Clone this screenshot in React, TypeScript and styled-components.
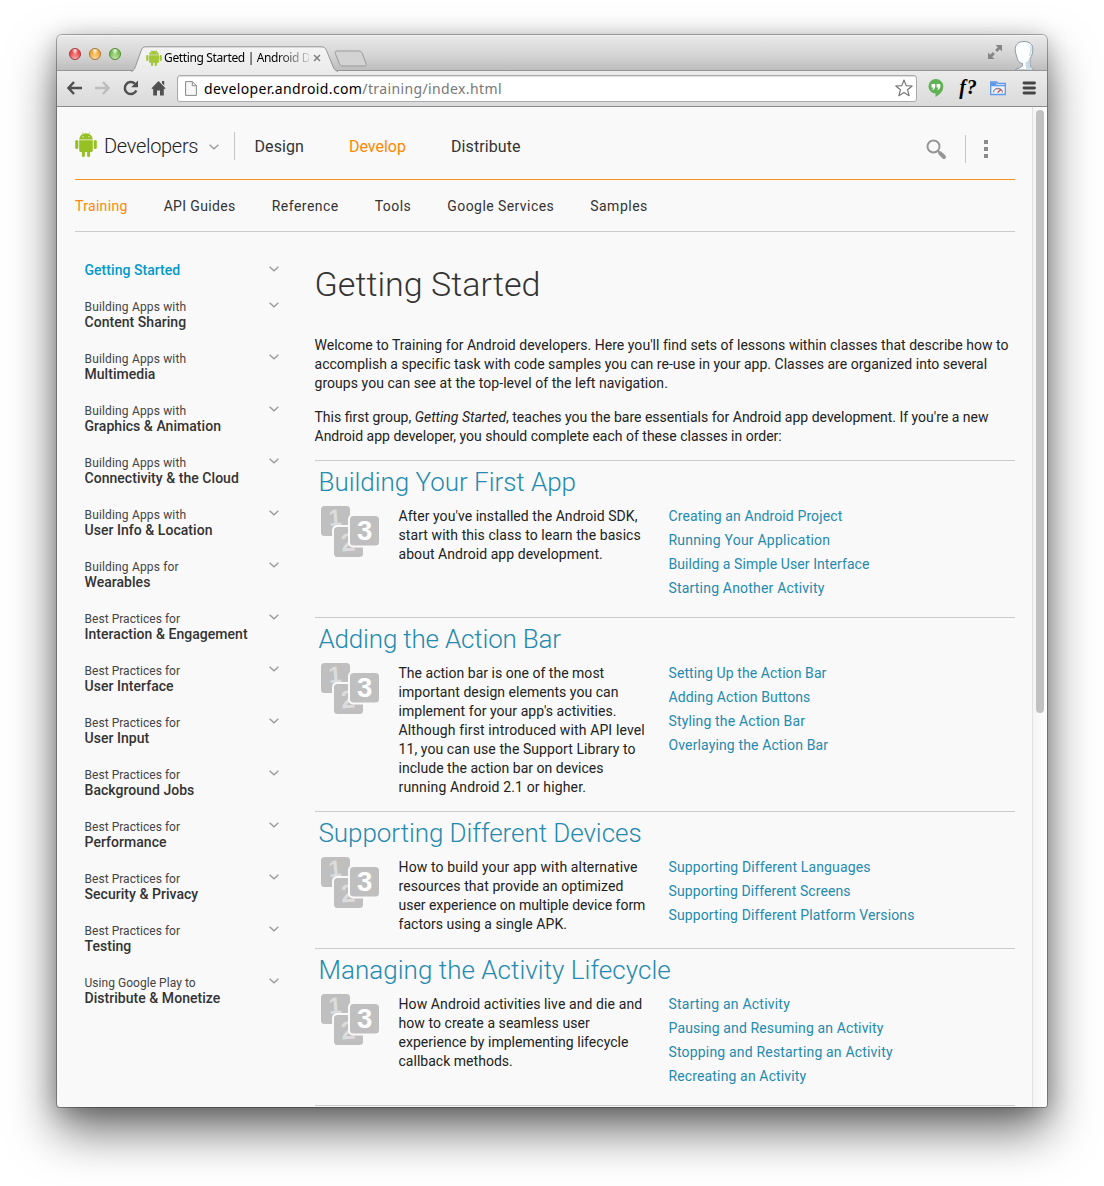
import React from 'react';
import styled, { createGlobalStyle } from 'styled-components';

const GlobalStyle = createGlobalStyle`
  * { box-sizing: border-box; }
  html, body { margin: 0; padding: 0; background: #fff; }
  body { font-family: Roboto, "Liberation Sans", sans-serif; color: #222; overflow: hidden; }
  ul, h1, h2, p { margin: 0; padding: 0; font-weight: inherit; }
  ul { list-style: none; }
  svg { display: block; flex: none; }
`;

const Desktop = styled.div`
  height: 1186px;
  padding: 35px 57px 79px;
`;

const Window = styled.div`
  display: flex;
  flex-direction: column;
  width: 990px;
  height: 1072px;
  border-radius: 5px 5px 3px 3px;
  background: #f9f9f9;
  box-shadow: 0 0 0 1px rgba(0, 0, 0, 0.3), 0 24px 48px rgba(0, 0, 0, 0.57), 0 4px 22px rgba(0, 0, 0, 0.24);
  overflow: hidden;
`;

const TitleBar = styled.div`
  display: flex;
  height: 36px;
  flex: none;
  padding-left: 12px;
  background: linear-gradient(#e9e9e9, #d4d4d4 55%, #bcbcbc);
  border-top: 1px solid #f4f4f4;
  box-shadow: inset 0 -1px 0 #979797;
`;

const Lights = styled.div`
  display: flex;
  gap: 8px;
  padding-top: 12px;
  width: 62px;
`;

const Light = styled.span<{ $hue: string; $edge: string }>`
  width: 12px;
  height: 12px;
  border-radius: 50%;
  border: 1px solid ${(p) => p.$edge};
  background: radial-gradient(ellipse at 50% 15%, rgba(255, 255, 255, 0.95) 0, rgba(255, 255, 255, 0) 42%),
    radial-gradient(circle at 50% 100%, rgba(255, 255, 255, 0.6), rgba(255, 255, 255, 0) 60%), ${(p) => p.$hue};
`;

const Tab = styled.div`
  position: relative;
  display: flex;
  align-items: center;
  width: 208px;
  height: 25px;
  margin-top: 10px;
  padding: 0 0 1px 15px;
`;

const TabShape = styled.svg`
  position: absolute;
  inset: 0;
`;

const TabLabel = styled.span`
  position: relative;
  width: 145px;
  margin: 0 0 0 2px;
  white-space: nowrap;
  font: 12px/16px "Noto Sans", "Open Sans", sans-serif;
  letter-spacing: -0.36px;
  color: #000;
  mask-image: linear-gradient(90deg, #000 112px, rgba(0, 0, 0, 0.15) 144px);
`;

const TabIcon = styled.span`
  position: relative;
`;

const NewTab = styled.svg`
  margin: 14px 0 0 -5px;
`;

const TitleActions = styled.div`
  display: flex;
  margin-left: auto;
  padding-right: 12px;
`;

const Toolbar = styled.div`
  display: flex;
  align-items: center;
  height: 36px;
  flex: none;
  padding: 0 10px 1px 9px;
  background: linear-gradient(#ebebeb, #dadada);
  border-bottom: 1px solid #8c8c8c;
`;

const NavButtons = styled.div`
  display: flex;
  gap: 11px;
  width: 111px;
`;

const Omnibox = styled.div`
  display: flex;
  align-items: center;
  width: 740px;
  height: 27px;
  padding: 0 3px 0 7px;
  border: 1px solid #aaa;
  border-radius: 3px;
  background: #fff;
  box-shadow: inset 0 1px 1px #ddd;
`;

const Url = styled.span`
  flex: 1;
  margin: 1px 0 0 7px;
  font: 14px/20px "Noto Sans", "Open Sans", sans-serif;
  letter-spacing: 0.375px;
  color: #000;
  em { font-style: normal; color: #777; }
`;

const Extensions = styled.div`
  display: flex;
  align-items: center;
  justify-content: space-between;
  width: 109px;
  margin-left: 11px;
`;

const FontFinder = styled.span`
  margin: -2px -4px 0 -1px;
  font: italic 700 20px/24px "Liberation Serif", serif;
  letter-spacing: 0.8px;
  color: #000;
  white-space: nowrap;
`;

const Viewport = styled.div`
  display: flex;
  flex: 1;
  min-height: 0;
`;

const Page = styled.div`
  width: 975px;
  padding: 0 17px 0 18px;
  overflow: hidden;
`;

const ScrollTrack = styled.div`
  width: 15px;
  padding: 3px 3px 0;
  border-left: 1px solid #e2e2e2;
  background: linear-gradient(90deg, #f4f4f4, #fefefe);
`;

const ScrollThumb = styled.div`
  width: 8px;
  height: 603px;
  border-radius: 4px;
  background: #c1c1c1;
`;

const Header = styled.header`
  display: flex;
  height: 73px;
  border-bottom: 1px solid #f7901e;
`;

const Brand = styled.div`
  display: flex;
  width: 160px;
  height: 28px;
  margin-top: 25px;
  border-right: 1px solid #c4c4c4;
`;

const BrandName = styled.span`
  width: 105px;
  margin-left: 7px;
  font-size: 20px;
  font-weight: 300;
  line-height: 28px;
  letter-spacing: -0.3px;
  color: #222;
`;

const TopNav = styled.nav`
  display: flex;
  gap: 45px;
  margin: 27px 0 0 19.5px;
  font-size: 16px;
  line-height: 26px;
`;

const NavLink = styled.a<{ $active?: boolean; $spacing?: number }>`
  color: ${(p) => (p.$active ? '#f80' : '#333')};
  letter-spacing: ${(p) => p.$spacing ?? 0}px;
  white-space: nowrap;
`;

const HeaderTools = styled.div`
  display: flex;
  align-items: center;
  gap: 18px;
  height: 28px;
  margin: 28px 27px 0 auto;
`;

const Divider = styled.span`
  width: 1px;
  height: 28px;
  background: #c8c8c8;
`;

const SubNav = styled.nav`
  display: flex;
  gap: 36px;
  height: 52px;
  margin-bottom: 0;
  font-size: 14px;
  line-height: 52px;
  border-bottom: 1px solid #ccc;
`;

const Columns = styled.div`
  display: flex;
`;

const Sidebar = styled.ul`
  width: 240px;
  padding: 20px 36px 0 9.5px;
`;

const SideItem = styled.li`
  display: flex;
  justify-content: space-between;
  padding: 10px 0;
  line-height: 16px;
`;

const SideLead = styled.span<{ $spacing: number }>`
  display: block;
  margin-bottom: -2px;
  font-size: 12px;
  line-height: 18px;
  letter-spacing: ${(p) => p.$spacing}px;
  color: #444;
`;

const SideTitle = styled.strong<{ $active?: boolean }>`
  display: block;
  font-size: 14px;
  font-weight: 500;
  letter-spacing: 0.04px;
  white-space: nowrap;
  color: ${(p) => (p.$active ? '#09c' : '#333')};
`;

const ChevronMark = styled.svg<{ $offset: number }>`
  margin-top: ${(p) => p.$offset}px;
`;

const Main = styled.main`
  width: 700px;
  padding-top: 28px;
`;

const PageTitle = styled.h1`
  margin: 0 0 28px -0.5px;
  font-size: 34px;
  font-weight: 300;
  line-height: 48px;
  letter-spacing: 0.05px;
  color: #333;
`;

const Paragraph = styled.p`
  margin: 0 0 15px -0.5px;
  font-size: 14px;
  line-height: 19px;

  & + section { margin-top: -1px; }
`;

const Line = styled.span<{ $spacing?: number }>`
  display: block;
  white-space: nowrap;
  letter-spacing: ${(p) => p.$spacing ?? 0}px;
`;

const Lesson = styled.section`
  border-top: 1px solid #ccc;
`;

const LessonTitle = styled.h2<{ $spacing: number }>`
  height: 45px;
  padding-left: 3.5px;
  font-size: 26px;
  font-weight: 300;
  line-height: 42px;
  color: #258aaf;
  letter-spacing: ${(p) => p.$spacing}px;
`;

const LessonBody = styled.div`
  display: grid;
  grid-template-columns: 77.5px 270px 1fr;
  padding-left: 6px;
  font-size: 14px;
  line-height: 19px;
`;

const Description = styled.p`
  padding-top: 1px;
  margin-bottom: 14px;
`;

const LessonLinks = styled.ul`
  margin-top: -2px;
  padding-bottom: 17px;
  line-height: 24px;
  color: #258aaf;
`;

const Bugdroid = ({ width, height, fill }: { width: number; height: number; fill: string }) => (
  <svg width={width} height={height} viewBox="0 0 22 25" fill={fill} preserveAspectRatio="none">
    <path d="M4.2 7.4C4.4 4.7 6 2.8 7.9 1.9L6.9.3l.4-.2 1.1 1.6a8 8 0 0 1 5.2 0L14.7.1l.4.2-1 1.6c1.900.9 3.500 2.800 3.700 5.500z" />
    <path d="M4.200 8.300h13.600v10.300a1.400 1.400 0 0 1-1.400 1.400h-1.300v3.400a1.500 1.500 0 0 1-3 0V20H9.900v3.400a1.500 1.500 0 0 1-3 0V20H5.600a1.400 1.400 0 0 1-1.400-1.400z" />
    <rect x="0.2" y="8" width="3.1" height="9" rx="1.5" />
    <rect x="18.7" y="8" width="3.1" height="9" rx="1.5" />
    <circle cx="8" cy="4.7" r=".6" fill="#f9f9f9" />
    <circle cx="14" cy="4.7" r=".6" fill="#f9f9f9" />
  </svg>
);

const Chevron = ({ offset = 4 }: { offset?: number }) => (
  <ChevronMark $offset={offset} width="10" height="6" viewBox="0 0 10 6">
    <path d="M.6 .8 5 4.800 9.400 .8" fill="none" stroke="#999" strokeWidth="1.300" />
  </ChevronMark>
);

const StepsIcon = () => (
  <svg width="58" height="52" viewBox="0 0 58 52" fontFamily="Liberation Sans, sans-serif" fontWeight="700">
    <rect width="29" height="30" rx="3.500" fill="#bfbfbf" />
    <text x="7.500" y="19.500" fontSize="23" fill="#dcdcdc" transform="rotate(-5 14 12)">1</text>
    <rect x="11" y="19" width="33" height="34" rx="5" fill="#f9f9f9" />
    <rect x="13" y="21" width="29" height="30" rx="3.500" fill="#bfbfbf" />
    <text x="20" y="45" fontSize="25" fill="#dcdcdc" transform="rotate(-5 27 36)">2</text>
    <rect x="27" y="8" width="33" height="33.500" rx="5" fill="#f9f9f9" />
    <rect x="29" y="10" width="29" height="29.500" rx="3.500" fill="#bfbfbf" />
    <text x="36" y="34" fontSize="27.500" fill="#fff">3</text>
  </svg>
);

const topics: [string, string][] = [
  ['', 'Getting Started'],
  ['Building Apps with', 'Content Sharing'],
  ['Building Apps with', 'Multimedia'],
  ['Building Apps with', 'Graphics & Animation'],
  ['Building Apps with', 'Connectivity & the Cloud'],
  ['Building Apps with', 'User Info & Location'],
  ['Building Apps for', 'Wearables'],
  ['Best Practices for', 'Interaction & Engagement'],
  ['Best Practices for', 'User Interface'],
  ['Best Practices for', 'User Input'],
  ['Best Practices for', 'Background Jobs'],
  ['Best Practices for', 'Performance'],
  ['Best Practices for', 'Security & Privacy'],
  ['Best Practices for', 'Testing'],
  ['Using Google Play to', 'Distribute & Monetize'],
];

type TrackedLine = [string, number];
type LessonData = { title: string; tracking: number; text: TrackedLine[]; links: TrackedLine[] };

const lessons: LessonData[] = [
  {
    title: 'Building Your First App',
    tracking: -0.03,
    text: [
      ["After you've installed the Android SDK,", 0.05],
      ['start with this class to learn the basics', 0.08],
      ['about Android app development.', 0.06],
    ],
    links: [
      ['Creating an Android Project', 0.11],
      ['Running Your Application', 0.22],
      ['Building a Simple User Interface', 0.08],
      ['Starting Another Activity', 0.19],
    ],
  },
  {
    title: 'Adding the Action Bar',
    tracking: -0.18,
    text: [
      ['The action bar is one of the most', 0.02],
      ['important design elements you can', 0.03],
      ["implement for your app's activities.", 0.04],
      ['Although first introduced with API level', 0.13],
      ['11, you can use the Support Library to', 0.08],
      ['include the action bar on devices', 0.03],
      ['running Android 2.1 or higher.', 0.14],
    ],
    links: [
      ['Setting Up the Action Bar', 0.09],
      ['Adding Action Buttons', 0.12],
      ['Styling the Action Bar', 0.15],
      ['Overlaying the Action Bar', 0.13],
    ],
  },
  {
    title: 'Supporting Different Devices',
    tracking: -0.06,
    text: [
      ['How to build your app with alternative', 0.14],
      ['resources that provide an optimized', 0.06],
      ['user experience on multiple device form', -0.03],
      ['factors using a single APK.', 0.05],
    ],
    links: [
      ['Supporting Different Languages', 0.14],
      ['Supporting Different Screens', 0.1],
      ['Supporting Different Platform Versions', 0.12],
    ],
  },
  {
    title: 'Managing the Activity Lifecycle',
    tracking: 0.03,
    text: [
      ['How Android activities live and die and', 0.1],
      ['how to create a seamless user', 0.06],
      ['experience by implementing lifecycle', 0.03],
      ['callback methods.', 0.02],
    ],
    links: [
      ['Starting an Activity', 0.21],
      ['Pausing and Resuming an Activity', 0.13],
      ['Stopping and Restarting an Activity', 0.18],
      ['Recreating an Activity', 0.14],
    ],
  },
];

const BrowserChrome = () => (
  <>
    <TitleBar>
      <Lights>
        <Light $hue="#ee4b4b" $edge="#a83a3a" />
        <Light $hue="#f3ab3a" $edge="#a8742c" />
        <Light $hue="#7cc254" $edge="#4f8a35" />
      </Lights>
      <Tab>
        <TabShape width="208" height="26" viewBox="0 0 208 26">
          <defs>
            <linearGradient id="tabFill" x1="0" y1="0" x2="0" y2="1">
              <stop offset="0" stopColor="#f4f4f4" />
              <stop offset="1" stopColor="#ebebeb" />
            </linearGradient>
          </defs>
          <path
            d="M0 25.500C3 24.500 3.500 23 4.500 20.500L10 5C11 2 12 .8 15 .8H190C193 .8 194.500 2 195.500 4.500L202 20.500C203 23 204 24.500 207 25.500"
            fill="url(#tabFill)"
            stroke="#969696"
          />
        </TabShape>
        <TabIcon><Bugdroid width={16} height={16} fill="#a4c639" /></TabIcon>
        <TabLabel>Getting Started | Android D</TabLabel>
        <TabIcon>
          <svg width="12" height="8" viewBox="-4 0 12 8">
            <path d="M1 1l6 6M7 1 1 7" stroke="#808080" strokeWidth="1.500" />
          </svg>
        </TabIcon>
      </Tab>
      <NewTab width="33" height="17" viewBox="0 0 33 17">
        <path d="M3 1H24.500C26.500 1 27.500 1.500 28.300 3.500L32 13.500C32.500 15 32 16 30.500 16H9C7 16 6 15 5.300 13.500L1.300 3.500C.7 2 1.200 1 3 1z" fill="#d3d3d3" stroke="#999" />
      </NewTab>
      <TitleActions>
        <svg width="27" height="24" viewBox="-2 -9 27 24" fill="#858585">
          <path d="M7.500 0H14V6.500L11.800 4.300 9.200 6.900 7.200 4.900 9.800 2.300z" />
          <path d="M6.500 14H0V7.500L2.200 9.700 4.800 7.100 6.800 9.100 4.200 11.700z" />
        </svg>
        <svg width="22" height="34" viewBox="0 -4 22 34">
          <path d="M2 30C4 28 9 28.500 9.500 25V23.500C6 23 4.500 20.500 4 17.500 3 14 2 12 2.300 8.500 2.600 4 6 1.500 11 1.500S20 4 19.800 9.500C19.600 13.500 19 16 17 18.500V24C17 27 19 28.500 21 30z" fill="#fdfeff" stroke="#8a9ba3" />
          <path d="M16.500 18.500V24c0 2.500 1.200 4.500 2.800 6H14c-1-2.500-1.500-4.500-1.500-7.500 1.800-.6 3-2 4-4z" fill="#c8dbe4" />
          <path d="M17.500 5.500C18.500 9 18 13 16.500 16" fill="none" stroke="#cfe0e8" strokeWidth="1.600" />
        </svg>
      </TitleActions>
    </TitleBar>
    <Toolbar>
      <NavButtons>
        <svg width="17" height="16" viewBox="0 0 17 16" fill="none" stroke="#505050" strokeWidth="2.500"><path d="M8 2 2.500 8 8 14M3 8H16" /></svg>
        <svg width="17" height="16" viewBox="0 0 17 16" fill="none" stroke="#bcbcbc" strokeWidth="2.500"><path d="M9 2l5.500 6L9 14M14 8H1" /></svg>
        <svg width="17" height="16" viewBox="0 0 17 16"><path d="M14.300 10.500A6 6 0 1 1 13 3.800" fill="none" stroke="#505050" strokeWidth="2.500" /><path d="M16 .5V7.300H9.200z" fill="#505050" /></svg>
        <svg width="17" height="16" viewBox="0 0 17 16" fill="#505050"><path d="M8.500 1 15.500 8.300 14.500 9.300 13.800 8.600V15.500H10V10.500H7V15.500H3.200V8.600L2.500 9.300 1.500 8.300zM12 1h2.200V5.500L12 3.300z" /></svg>
      </NavButtons>
      <Omnibox>
        <svg width="12" height="15" viewBox="0 0 12 15"><path d="M.6.6H7.300L11.400 4.700V14.400H.6z M7.300.6V4.700H11.400" fill="#f7f7f7" stroke="#888" /></svg>
        <Url>developer.android.com<em>/training/index.html</em></Url>
        <svg width="18" height="18" viewBox="0 0 18 18"><path d="M9 1 11.200 6.600 17.200 7 12.600 10.800 14.100 16.700 9 13.500 3.900 16.700 5.400 10.800.8 7 6.800 6.600z" fill="#fff" stroke="#777" strokeWidth="1.200" strokeLinejoin="round" /></svg>
      </Omnibox>
      <Extensions>
        <svg width="16" height="18" viewBox="0 0 16 18">
          <path d="M8 0a7.300 7.300 0 0 0-.5 14.600V18C12 15.500 15.300 12 15.300 7.500A7.300 7.300 0 0 0 8 0z" fill="#61b256" />
          <path d="M3.500 5H7.200V8.500L5.500 10.800H4.300L5.300 8.500H3.500zM8.600 5h3.700v3.500l-1.700 2.300H9.400l1-2.300H8.600z" fill="#fff" />
        </svg>
        <FontFinder>f?</FontFinder>
        <svg width="16" height="15" viewBox="0 0 16 15">
          <path d="M.7 1H6.500L8 2.500H15.300V13.500H.7z" fill="#eef4ff" stroke="#5f98ea" strokeWidth="1.300" />
          <path d="M1 1.500H6.500V4H15V5.200H1z" fill="#5f98ea" />
          <path d="M3.500 11.500a4.500 4 0 0 1 9 0" fill="none" stroke="#8b8b8b" strokeWidth="1.300" />
          <path d="M7.500 11.500 11 8.500" stroke="#db4437" strokeWidth="1.300" />
        </svg>
        <svg width="15" height="14" viewBox="0 0 15 14" stroke="#444" strokeWidth="2.800" strokeLinecap="round"><path d="M2 2H12.500M2 7H12.500M2 12H12.500" /></svg>
      </Extensions>
    </Toolbar>
  </>
);

const sections: TrackedLine[] = [
  ['API Guides', 0.36],
  ['Reference', 0.48],
  ['Tools', 0.46],
  ['Google Services', 0.43],
  ['Samples', 0.5],
];

export default function App() {
  return (
    <Desktop>
      <GlobalStyle />
      <Window>
        <BrowserChrome />
        <Viewport>
          <Page>
            <Header>
              <Brand>
                <Bugdroid width={22} height={25} fill="#97c024" />
                <BrandName>Developers</BrandName>
                <Chevron offset={12} />
              </Brand>
              <TopNav>
                <NavLink $spacing={0.08}>Design</NavLink>
                <NavLink $active>Develop</NavLink>
                <NavLink $spacing={0.1}>Distribute</NavLink>
              </TopNav>
              <HeaderTools>
                <svg width="21" height="21" viewBox="0 0 21 21" fill="none" stroke="#969696">
                  <circle cx="7.500" cy="7.500" r="6" strokeWidth="2" />
                  <path d="M12 12l2 2" strokeWidth="2" />
                  <path d="M14.300 14.300l3.700 3.700" strokeWidth="4" strokeLinecap="round" />
                </svg>
                <Divider />
                <svg width="4" height="18" viewBox="0 0 4 18" fill="#8c8c8c"><path d="M0 0h4v4H0zM0 7h4v4H0zM0 14h4v4H0z" /></svg>
              </HeaderTools>
            </Header>
            <SubNav>
              <NavLink $active $spacing={0.32}>Training</NavLink>
              {sections.map(([name, spacing]) => (
                <NavLink key={name} $spacing={spacing}>{name}</NavLink>
              ))}
            </SubNav>
            <Columns>
              <Sidebar>
                {topics.map(([lead, name]) => (
                  <SideItem key={name}>
                    <div>
                      {lead && <SideLead $spacing={lead.startsWith('Building') ? 0.16 : 0.04}>{lead}</SideLead>}
                      <SideTitle $active={!lead}>{name}</SideTitle>
                    </div>
                    <Chevron />
                  </SideItem>
                ))}
              </Sidebar>
              <Main>
                <PageTitle>Getting Started</PageTitle>
                <Paragraph>
                  <Line $spacing={0.028}>Welcome to Training for Android developers. Here you'll find sets of lessons within classes that describe how to</Line>
                  <Line $spacing={0.022}>accomplish a specific task with code samples you can re-use in your app. Classes are organized into several</Line>
                  <Line $spacing={0.05}>groups you can see at the top-level of the left navigation.</Line>
                </Paragraph>
                <Paragraph>
                  <Line>This first group, <em>Getting Started</em>, teaches you the bare essentials for Android app development. If you're a new</Line>
                  <Line>Android app developer, you should complete each of these classes in order:</Line>
                </Paragraph>
                {lessons.map((lesson) => (
                  <Lesson key={lesson.title}>
                    <LessonTitle $spacing={lesson.tracking}>{lesson.title}</LessonTitle>
                    <LessonBody>
                      <StepsIcon />
                      <Description>
                        {lesson.text.map(([line, spacing]) => <Line key={line} $spacing={spacing}>{line}</Line>)}
                      </Description>
                      <LessonLinks>
                        {lesson.links.map(([link, spacing]) => (
                          <li key={link}><Line $spacing={spacing}>{link}</Line></li>
                        ))}
                      </LessonLinks>
                    </LessonBody>
                  </Lesson>
                ))}
                <Lesson />
              </Main>
            </Columns>
          </Page>
          <ScrollTrack><ScrollThumb /></ScrollTrack>
        </Viewport>
      </Window>
    </Desktop>
  );
}
